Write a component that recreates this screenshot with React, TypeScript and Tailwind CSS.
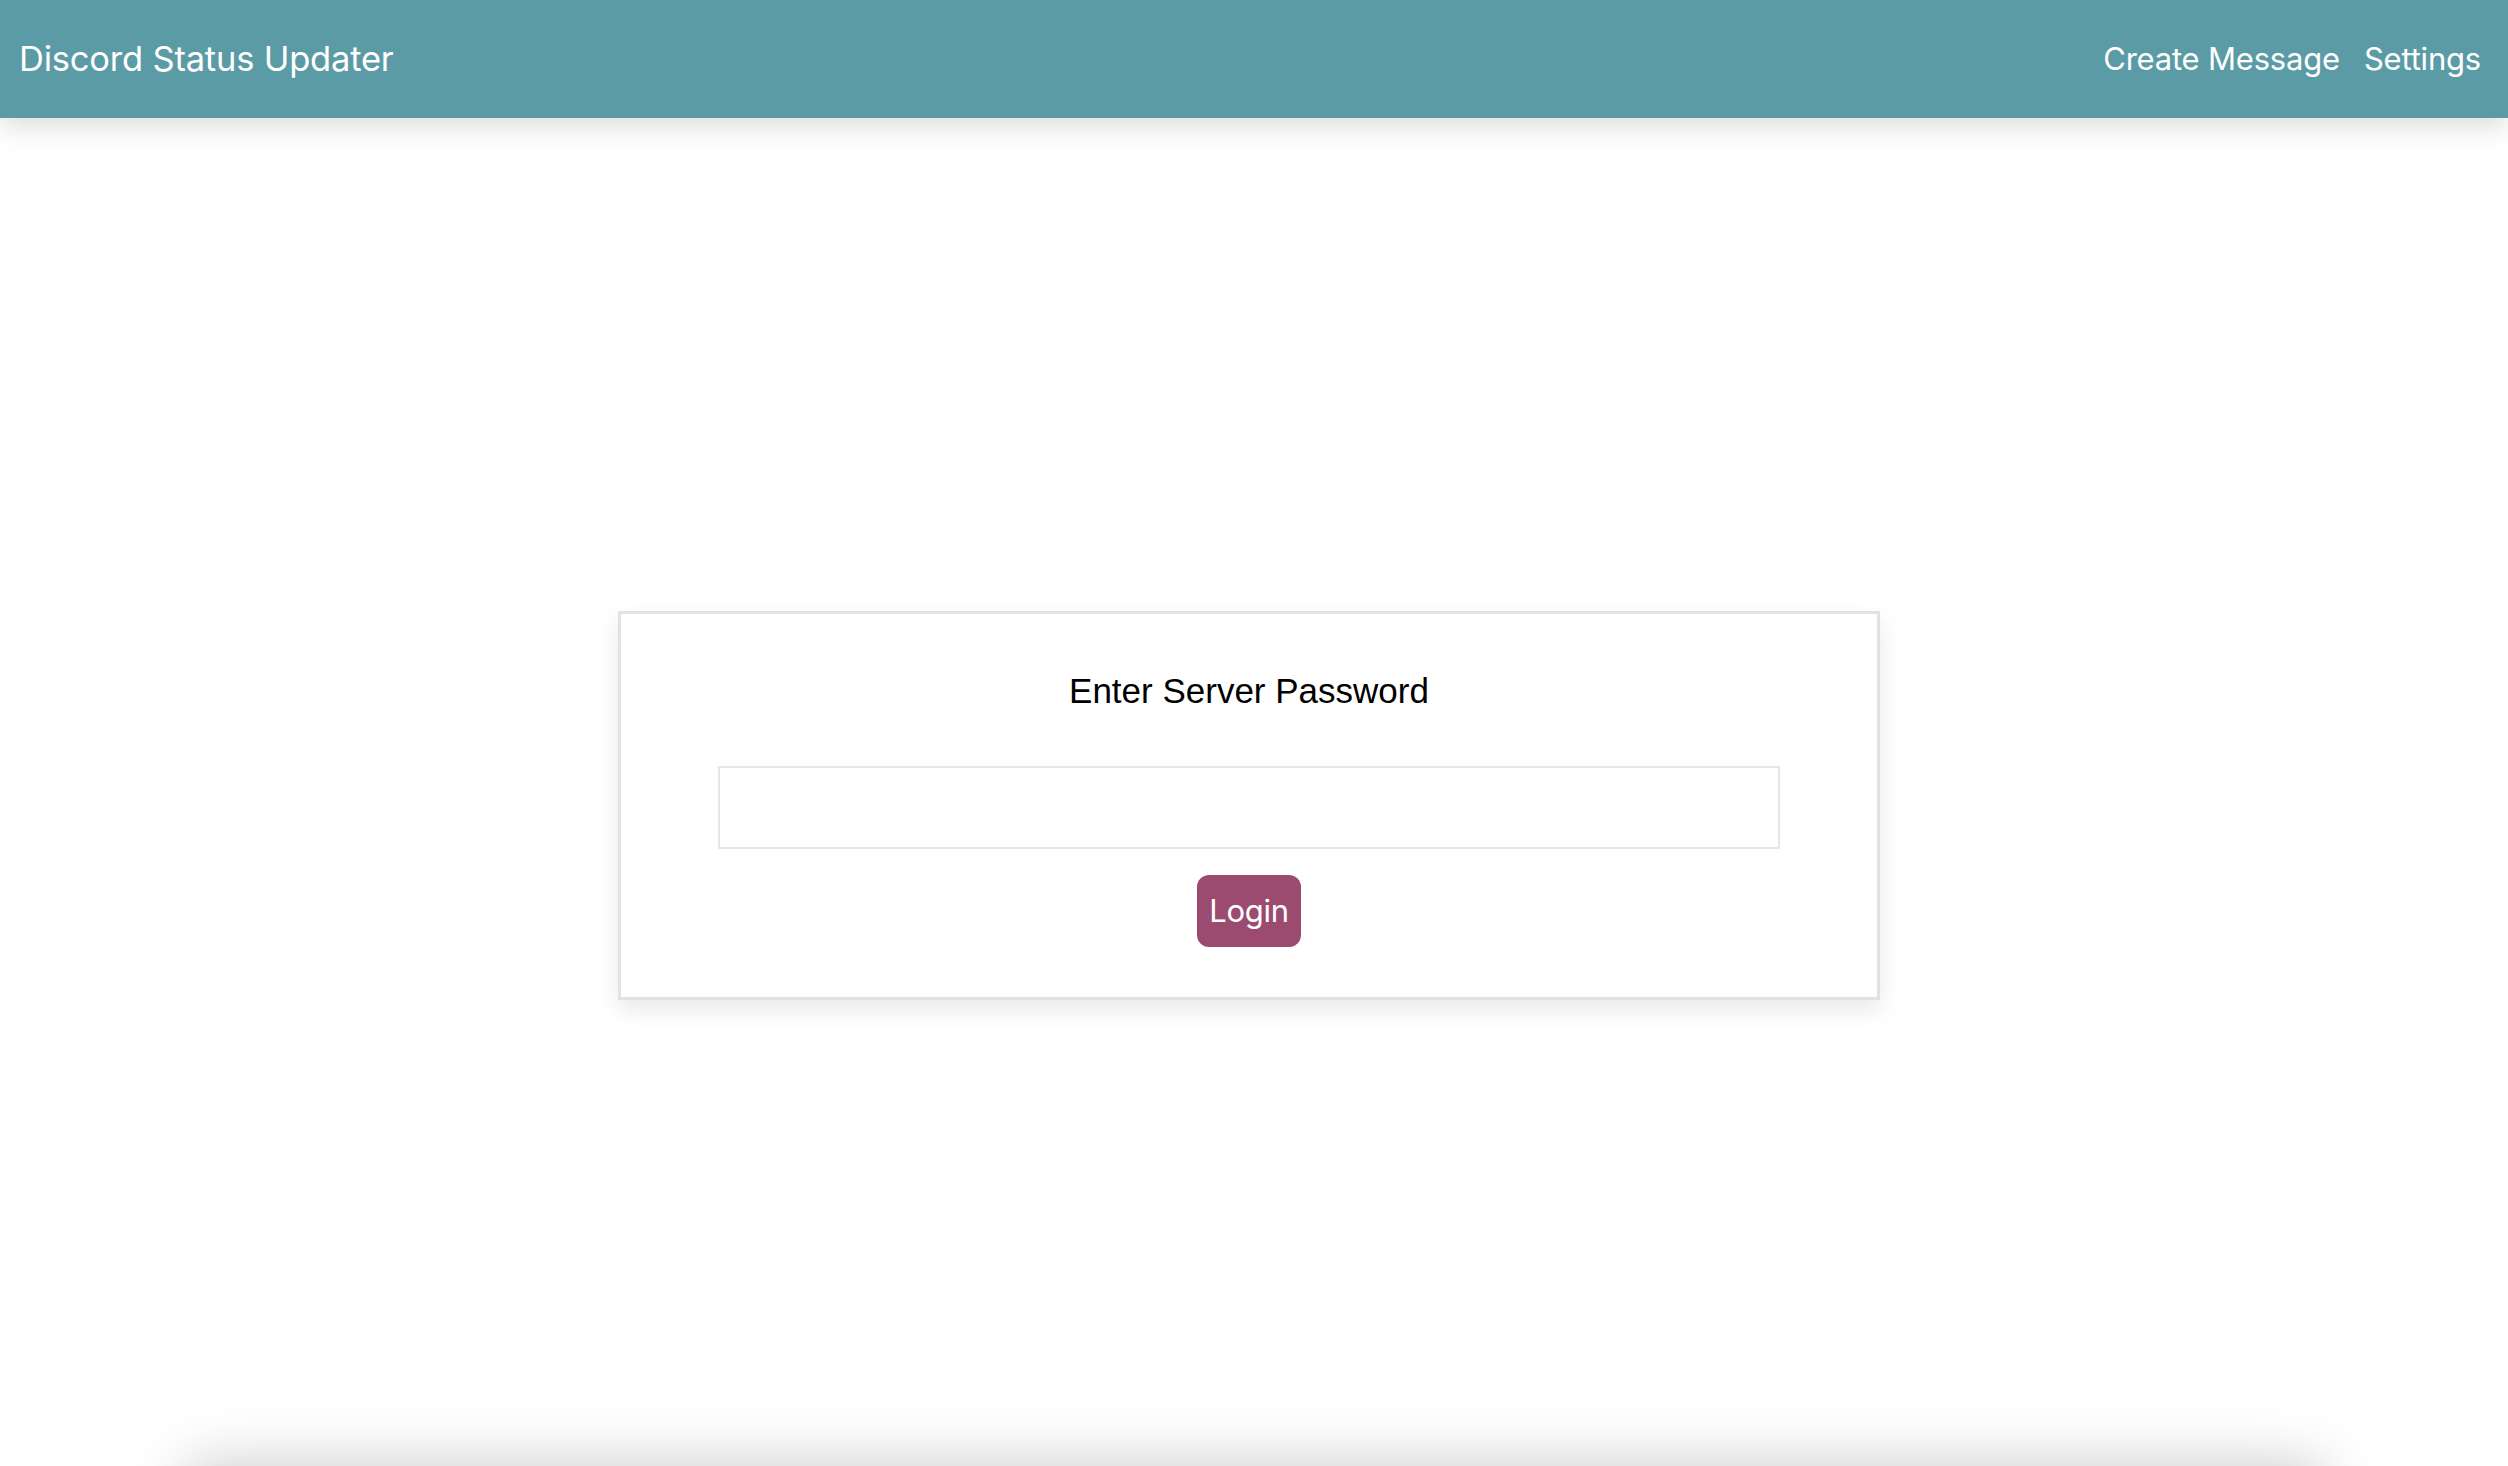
import React, { useState } from 'react';

function Header() {
  return (
    <header className="h-[118px] shrink-0 bg-[#5b9ba5] flex items-center justify-between pl-[19px] pr-[27px] shadow-[0_6px_28px_rgba(0,0,0,0.16)] relative z-10">
      <h1 className="text-white text-[34.5px] font-normal font-['Inter',sans-serif] tracking-[-0.2px]">
        Discord Status Updater
      </h1>
      <nav className="flex items-center gap-[24px] text-white text-[31px] font-['Inter',sans-serif] tracking-[-0.2px]">
        <a href="#" className="hover:underline">Create Message</a>
        <a href="#" className="hover:underline">Settings</a>
      </nav>
    </header>
  );
}

function LoginCard() {
  const [password, setPassword] = useState('');

  return (
    <div className="w-[1262px] mr-[10px] border-[3px] border-[#e2e2e6] bg-white shadow-[0_10px_22px_rgba(0,0,0,0.09)] pt-[57px] pb-[50px] px-[97px] flex flex-col items-center">
      <h2 className="text-black text-[35px] leading-[40px] font-['Liberation_Sans',Arial,sans-serif]">
        Enter Server Password
      </h2>
      <input
        type="password"
        value={password}
        onChange={(e) => setPassword(e.target.value)}
        className="mt-[55px] w-full h-[83px] border-2 border-[#e6e6ea] bg-white outline-none px-4 text-[30px]"
      />
      <button className="mt-[26px] w-[104px] h-[72px] rounded-[12px] bg-[#9b4a70] text-white text-[31px] font-['Inter',sans-serif] tracking-[-0.3px]">
        Login
      </button>
    </div>
  );
}

export default function App() {
  return (
    <div className="h-screen overflow-hidden bg-white">
      <div className="min-h-screen flex flex-col">
        <Header />
        <main className="flex-1 flex justify-center items-start pt-[493px]">
          <LoginCard />
        </main>
      </div>
      <div className="h-40 mx-[186px] bg-white shadow-[0_0_60px_rgba(0,0,0,0.22)]" />
    </div>
  );
}
